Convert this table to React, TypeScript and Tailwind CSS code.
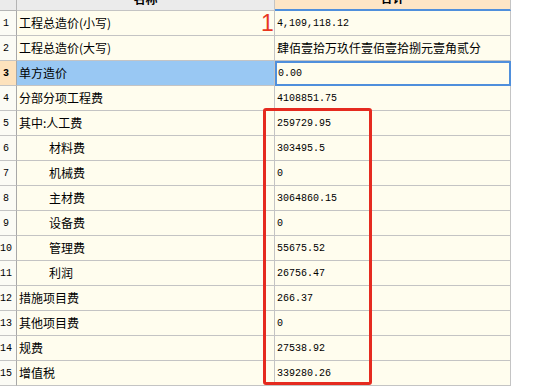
import React from "react";

type Row = { n: number; name: string; val: string; indent?: boolean; cjkVal?: boolean };

const rows: Row[] = [
  { n: 1, name: "工程总造价(小写)", val: "4,109,118.12" },
  { n: 2, name: "工程总造价(大写)", val: "肆佰壹拾万玖仟壹佰壹拾捌元壹角贰分", cjkVal: true },
  { n: 3, name: "单方造价", val: "0.00" },
  { n: 4, name: "分部分项工程费", val: "4108851.75" },
  { n: 5, name: "其中:人工费", val: "259729.95" },
  { n: 6, name: "材料费", val: "303495.5", indent: true },
  { n: 7, name: "机械费", val: "0", indent: true },
  { n: 8, name: "主材费", val: "3064860.15", indent: true },
  { n: 9, name: "设备费", val: "0", indent: true },
  { n: 10, name: "管理费", val: "55675.52", indent: true },
  { n: 11, name: "利润", val: "26756.47", indent: true },
  { n: 12, name: "措施项目费", val: "266.37" },
  { n: 13, name: "其他项目费", val: "0" },
  { n: 14, name: "规费", val: "27538.92" },
  { n: 15, name: "增值税", val: "339280.26" },
];

const cjk = "font-['Noto_Sans_CJK_SC',sans-serif]";
const mono = "font-['Liberation_Mono','Noto_Sans_CJK_SC',monospace]";

export default function App() {
  const selected = 3;
  return (
    <div className="relative w-[537px] h-[386px] overflow-hidden bg-white text-black">
      <div className="w-[511px]">
        {/* header (scrolled, only the bottom of the captions shows) */}
        <div className="flex h-[11px]">
          <div className="w-[17px] h-full bg-[#ebebeb] border-r border-b border-[#b4b4b4]" />
          <div className="w-[258px] h-full bg-[#ebebeb] border-r border-b border-[#c4c4c4] overflow-hidden flex justify-center">
            <span className={`${cjk} text-[12px] font-bold leading-[12px] -mt-[7px]`}>名称</span>
          </div>
          <div className="w-[236px] h-full bg-[#fde5c6] border-r border-[#c4c4c4] border-b-2 border-b-[#4f8fdc] overflow-hidden flex justify-center">
            <span className={`${cjk} text-[12px] font-bold leading-[12px] -mt-[8px]`}>合计</span>
          </div>
        </div>

        {rows.map((r) => {
          const sel = r.n === selected;
          return (
            <div key={r.n} className="flex h-[25px]">
              <div
                className={`w-[17px] h-full border-r border-b border-r-[#a8a8a8] border-b-[#c4c4c4] flex items-center justify-center pr-[4px] ${mono} text-[10px] ${
                  sel ? "bg-[#fde2bd] font-bold" : "bg-[#fbfbf5]"
                }`}
              >
                {r.n}
              </div>
              <div
                className={`w-[258px] h-full border-r border-b border-[#c4c4c4] flex items-center ${cjk} text-[12px] ${
                  r.indent ? "pl-[32px]" : "pl-[2px]"
                } ${sel ? "bg-[#99c8f3]" : "bg-[#fffdee]"}`}
              >
                {r.name}
              </div>
              <div
                className={`w-[236px] h-full flex items-center bg-[#fffdee] ${
                  r.cjkVal ? `${cjk} text-[12px]` : `${mono} text-[10px]`
                } ${
                  sel
                    ? "border-2 border-[#4f8fdc] pl-[1px]"
                    : "border-r border-b border-[#c4c4c4] pl-[2px]"
                }`}
              >
                {r.val}
              </div>
            </div>
          );
        })}
      </div>

      {/* annotation marks */}
      <span className="absolute left-[261px] top-[12px] font-['Liberation_Sans',sans-serif] text-[23px] leading-none text-[#e8361e]">
        1
      </span>
      <div className="absolute left-[263px] top-[108px] w-[109px] h-[277px] border-[3px] border-[#e52a1f] rounded-[3px]" />
    </div>
  );
}
